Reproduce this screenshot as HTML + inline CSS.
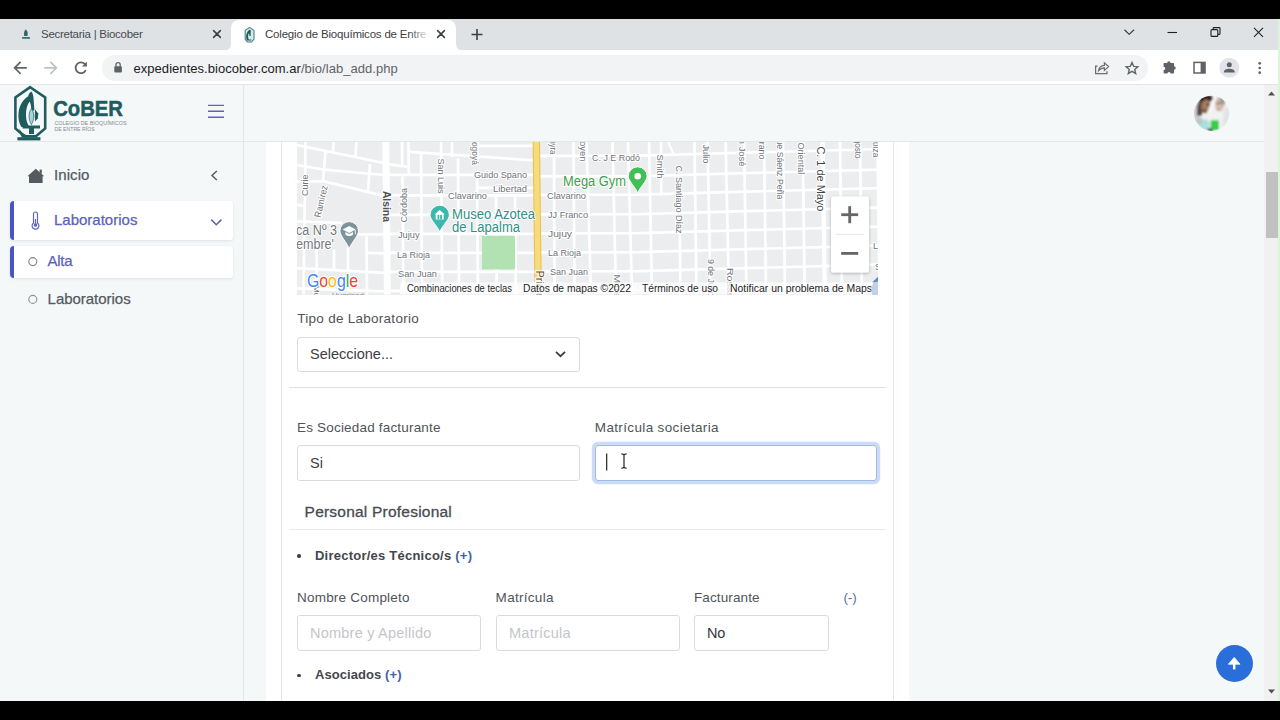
<!DOCTYPE html>
<html>
<head>
<meta charset="utf-8">
<title>Colegio de Bioquímicos de Entre Ríos</title>
<style>
*{box-sizing:border-box;margin:0;padding:0}
html,body{width:1280px;height:720px;overflow:hidden;background:#000;font-family:"Liberation Sans",sans-serif;}
.abs{position:absolute}
#stage{position:absolute;left:0;top:0;width:1280px;height:720px;overflow:hidden;background:#000}
/* browser chrome */
#tabstrip{left:0;top:19px;width:1280px;height:32px;background:#dee2e5}
#tab2{left:231px;top:20px;width:225px;height:31px;background:#fff;border-radius:8px 8px 0 0}
.tabtxt{font-size:11.5px;color:#3c4043;white-space:nowrap;letter-spacing:-0.27px}
#toolbar{left:0;top:50px;width:1280px;height:35px;background:#fff;border-bottom:1px solid #e3e6e8}
#omni{left:101.5px;top:55px;width:1046.5px;height:26px;border-radius:13px;background:#f1f3f4}
#url{left:133.5px;top:60.5px;font-size:13px;color:#202124;white-space:nowrap;letter-spacing:.045px}
#url span{color:#5f6368}
/* page */
#page{left:0;top:85px;width:1264px;height:616px;background:#f5f8f9;overflow:hidden}
#sidebar{left:0;top:0;width:244px;height:616px;border-right:1px solid #e2e6e9;background:#f5f8f9}
#sidehead{left:0;top:0;width:1264px;height:57px;border-bottom:1px solid #e3e7ea}
#mainhead{left:244px;top:0;width:1020px;height:56px}
.nav{font-size:15px;color:#545a5f;white-space:nowrap;letter-spacing:0;-webkit-text-stroke:.25px currentColor}
.navact{background:#fff;border-radius:4px 3px 3px 4px;box-shadow:0 1px 3px rgba(60,70,90,.12)}
#card{left:266px;top:57px;width:643px;height:570px;background:#fff}
.lbl{font-size:13.5px;color:#4f5458;white-space:nowrap;letter-spacing:.25px}
.inp{background:#fff;border:1px solid #d9dcdf;border-radius:3px;font-size:14.5px;color:#3c4043;padding-left:12px;white-space:nowrap}
.ph{color:#c3c6ca}
.hr{height:1px;background:#dfe2e5}
.b{font-weight:bold;font-size:13px;color:#43474b;white-space:nowrap;letter-spacing:.234px}
.dot{width:3.6px;height:3.6px;border-radius:50%;background:#3f4447}
.lk{color:#3f62a8}
#sbar{left:1264px;top:85px;width:16px;height:616px;background:#f1f1f1}
#sthumb{left:1266px;top:172px;width:12px;height:66px;background:#c1c1c1}
#gstrip{left:1278px;top:19px;width:2px;height:682px;background:#dcf5d8}
</style>
</head>
<body>
<div id="stage">
  <!-- TAB STRIP -->
  <div id="tabstrip" class="abs"></div>
  <div id="tab2" class="abs"></div>
  <div class="abs tabtxt" style="left:41px;top:28px;color:#474b4f">Secretaria | Biocober</div>
  <div class="abs tabtxt" style="left:265px;top:28px;width:164px;overflow:hidden;letter-spacing:-0.2px">Colegio de Bioquímicos de Entre Ríos</div><div class="abs" style="left:409px;top:24px;width:21px;height:22px;background:linear-gradient(90deg,rgba(255,255,255,0),#fff)"></div>
  <!-- TOOLBAR -->
  <div id="toolbar" class="abs"></div>
  <div id="omni" class="abs"></div>
  <div id="url" class="abs">expedientes.biocober.com.ar<span>/bio/lab_add.php</span></div>


  <svg class="abs" style="left:0;top:0" width="1280" height="86" viewBox="0 0 1280 86" fill="none" stroke-linecap="round" stroke-linejoin="round">
    <!-- tab curve feet -->
    <path d="M223,51 Q231,51 231,43 L231,51Z" fill="#fff" stroke="none"/>
    <path d="M464,51 Q456,51 456,43 L456,51Z" fill="#fff" stroke="none"/>
    <!-- favicon 1 -->
    <g stroke="none" fill="#2a6b69">
      <path d="M25.6,29.5 C27.6,30.5 28.2,33 27.4,36 L24.2,36 C23.6,33.5 24,31 25.6,29.5Z"/>
      <rect x="22" y="37" width="8" height="1.8" rx=".5" fill="#37716f"/>
    </g>
    <!-- favicon 2 -->
    <g>
      <path d="M249.6,27.4 L254,30.4 L254,39.2 L251.6,42 L247.4,42 L245.2,39.2 L245.2,30.4Z" stroke="#4f7f80" stroke-width="1.1" fill="#d6eaee"/>
      <path d="M250,29.6 C251,30.6 251,32 250.6,33.6 L250.8,36 L249.6,36 C249.4,34.6 249.2,33.6 248.8,33.2 C247.8,35 247.8,37.4 248.8,39.6 L251.4,39.6 L251.4,40.6 L247,40.6 C245.8,38 245.8,34.6 247.4,32 C248,31 249,30 250,29.6Z" fill="#1f5b5d" stroke="none"/>
    </g>
    <!-- tab close x -->
    <g stroke="#3c4043" stroke-width="1.5">
      <path d="M213.6,30.6 L220.4,37.4 M220.4,30.6 L213.6,37.4"/>
      <path d="M437.6,30.6 L444.4,37.4 M444.4,30.6 L437.6,37.4"/>
    </g>
    <!-- new tab plus -->
    <path d="M471.5,34.5 L482.5,34.5 M477,29 L477,40" stroke="#3c4043" stroke-width="1.6" stroke-linecap="butt"/>
    <!-- window controls -->
    <g stroke="#202124" stroke-width="1.1" stroke-linecap="butt">
      <path d="M1124.5,29.8 L1129.2,34.4 L1134,29.8" stroke="#3c4043" stroke-width="1.2"/>
      <path d="M1167.5,32.5 L1177,32.5"/>
      <rect x="1211" y="29.6" width="6.8" height="6.8" rx="1"/>
      <path d="M1213.2,29.4 L1213.2,28.2 Q1213.2,27.6 1213.8,27.6 L1219.4,27.6 Q1220,27.6 1220,28.2 L1220,33.8 Q1220,34.4 1219.4,34.4 L1218,34.4"/>
      <path d="M1254,27.8 L1263,36.8 M1263,27.8 L1254,36.8"/>
    </g>
    
    <!-- nav arrows -->
    <g stroke="#5f6368" stroke-width="1.7" stroke-linecap="butt" stroke-linejoin="miter">
      <path d="M26.8,67.8 L15,67.8 M20.6,61.8 L14.6,67.8 L20.6,73.8"/>
    </g>
    <g stroke="#bdc1c6" stroke-width="1.7" stroke-linecap="butt" stroke-linejoin="miter">
      <path d="M44.2,67.8 L56,67.8 M50.4,61.8 L56.4,67.8 L50.4,73.8"/>
    </g>
    <!-- reload -->
    <g stroke="#5f6368" stroke-width="1.8" stroke-linecap="butt">
      <path d="M85.2,64.4 A5.4,5.4 0 1 0 85.8,70.2"/>
      <path d="M86.9,61.6 L86.9,66.4 L82.1,66.4Z" fill="#5f6368" stroke="none"/>
    </g>
    <!-- lock -->
    <g>
      <rect x="114.3" y="66.2" width="7.6" height="6.2" rx="1" fill="#5f6368" stroke="none"/>
      <path d="M116,66.4 L116,64.8 A2.1,2.1 0 0 1 120.2,64.8 L120.2,66.4" stroke="#5f6368" stroke-width="1.3"/>
    </g>
    <!-- share -->
    <g stroke="#6b6f74" stroke-width="1.25" stroke-linecap="butt" stroke-linejoin="miter">
      <path d="M1097.6,66.2 L1095.6,66.2 L1095.6,73.6 L1107,73.6 L1107,71.2"/>
      <path d="M1098.6,70.6 C1099,67.4 1101.4,65.6 1104.4,65.4 L1104.4,62.8 L1108.6,66.6 L1104.4,70.4 L1104.4,67.8 C1102,67.8 1100.2,68.6 1098.6,70.6Z"/>
    </g>
    <!-- star -->
    <path d="M1132,62.4 L1133.7,66.3 L1137.9,66.7 L1134.7,69.5 L1135.7,73.6 L1132,71.4 L1128.3,73.6 L1129.3,69.5 L1126.1,66.7 L1130.3,66.3Z" stroke="#5f6368" stroke-width="1.35" stroke-linejoin="miter"/>
    <!-- puzzle -->
    <path d="M1167.2,63 a1.7,1.7 0 0 1 3.4,0 L1173.4,63 Q1174,63 1174,63.6 L1174,66.2 a1.75,1.75 0 0 1 0,3.5 L1174,72.8 Q1174,73.6 1173.2,73.6 L1170.6,73.6 a1.6,1.6 0 0 0 -3.2,0 L1164.4,73.6 Q1163.6,73.6 1163.6,72.8 L1163.6,70 a1.6,1.6 0 0 0 0,-3.2 L1163.6,63.8 Q1163.6,63 1164.4,63Z" fill="#5f6368" stroke="none"/>
    <!-- side panel -->
    <g>
      <rect x="1194" y="62.4" width="11" height="10.6" stroke="#5f6368" stroke-width="1.5" stroke-linejoin="miter"/>
      <rect x="1200.6" y="62.4" width="4.6" height="10.6" fill="#5f6368" stroke="none"/>
    </g>
    <!-- profile -->
    <circle cx="1229.3" cy="67.8" r="10" fill="#e2e4ea" stroke="none"/>
    <circle cx="1229.3" cy="64.8" r="2.5" fill="#5f6368" stroke="none"/>
    <path d="M1223.8,72.6 C1223.8,69.6 1226.6,68.8 1229.3,68.8 C1232,68.8 1234.8,69.6 1234.8,72.6Z" fill="#5f6368" stroke="none"/>
    <!-- menu -->
    <g fill="#5f6368" stroke="none">
      <circle cx="1259.7" cy="63.3" r="1.35"/><circle cx="1259.7" cy="68" r="1.35"/><circle cx="1259.7" cy="72.7" r="1.35"/>
    </g>
  </svg>
  <!-- PAGE -->
  <div id="page" class="abs">
    <div id="sidebar" class="abs"></div>
    <div id="mainhead" class="abs"></div>
    <div id="card" class="abs"></div>
    <div id="sidehead" class="abs"></div>
    <div class="abs" style="left:281px;top:57px;width:613px;height:600px;border:1px solid #e4e7ea;border-top:none"></div>

    <!-- sidebar nav -->
    <div class="abs nav" style="left:54px;top:81.3px;letter-spacing:.09px">Inicio</div>
    <div class="abs navact" style="left:10px;top:116px;width:223px;height:39px;border-left:4px solid #4a55c4"></div>
    <div class="abs nav" style="left:54px;top:126.3px;color:#5a62ba">Laboratorios</div>
    <div class="abs navact" style="left:10px;top:161px;width:223px;height:32px;border-left:4px solid #4a55c4"></div>
    <div class="abs nav" style="left:47.6px;top:167.3px;color:#5a62ba;letter-spacing:-.3px">Alta</div>
    <div class="abs nav" style="left:47.6px;top:205.3px;letter-spacing:-.03px">Laboratorios</div>

    <!-- form -->
    <!--MAP--><svg class="abs" style="left:297px;top:56.6px" width="581" height="153" viewBox="0 0 581 153" font-family="Liberation Sans, sans-serif">
<rect width="581" height="153" fill="#ebedef"/>
<line x1="8.5" y1="-0.6" x2="6.5" y2="152.4" stroke="#fff" stroke-width="2.7"/>
<line x1="0.0" y1="3.1" x2="87.0" y2="21.0" stroke="#fff" stroke-width="2.7"/>
<polyline points="0.0,23.0 27.0,27.7 87.0,33.0" fill="none" stroke="#fff" stroke-width="2.7"/>
<line x1="0.0" y1="39.4" x2="27.0" y2="39.4" stroke="#fff" stroke-width="2.7"/>
<line x1="27.0" y1="39.4" x2="87.0" y2="53.9" stroke="#fff" stroke-width="2.7"/>
<line x1="0.0" y1="62.9" x2="9.0" y2="64.0" stroke="#fff" stroke-width="2.7"/>
<line x1="36.7" y1="-1.6" x2="36.0" y2="8.9" stroke="#fff" stroke-width="2.7"/>
<line x1="59.5" y1="-1.6" x2="58.5" y2="14.4" stroke="#fff" stroke-width="2.7"/>
<line x1="28.5" y1="9.9" x2="26.0" y2="39.4" stroke="#fff" stroke-width="2.7"/>
<line x1="73.0" y1="21.9" x2="71.0" y2="49.4" stroke="#fff" stroke-width="2.7"/>
<line x1="0.0" y1="79.4" x2="45.0" y2="80.9" stroke="#fff" stroke-width="2.7"/>
<line x1="61.0" y1="92.4" x2="87.0" y2="92.4" stroke="#fff" stroke-width="2.7"/>
<line x1="70.0" y1="110.9" x2="87.0" y2="111.4" stroke="#fff" stroke-width="2.7"/>
<line x1="0.0" y1="126.1" x2="87.0" y2="130.8" stroke="#fff" stroke-width="2.7"/>
<line x1="19.7" y1="106.4" x2="19.7" y2="152.4" stroke="#fff" stroke-width="2.7"/>
<line x1="37.0" y1="107.4" x2="37.0" y2="127.4" stroke="#fff" stroke-width="2.7"/>
<line x1="51.0" y1="105.4" x2="51.0" y2="128.4" stroke="#fff" stroke-width="2.7"/>
<line x1="69.5" y1="94.4" x2="70.0" y2="152.4" stroke="#fff" stroke-width="2.7"/>
<line x1="0.0" y1="146.4" x2="87.0" y2="149.4" stroke="#fff" stroke-width="2.7"/>
<line x1="105.0" y1="-0.6" x2="105.2" y2="23.9" stroke="#fff" stroke-width="2.7"/>
<line x1="105.5" y1="34.4" x2="106.4" y2="152.4" stroke="#fff" stroke-width="2.7"/>
<line x1="111.5" y1="-0.6" x2="111.8" y2="33.4" stroke="#fff" stroke-width="2.7"/>
<line x1="124.0" y1="10.4" x2="125.1" y2="152.4" stroke="#fff" stroke-width="2.7"/>
<line x1="144.0" y1="-0.6" x2="145.2" y2="152.4" stroke="#fff" stroke-width="2.7"/>
<line x1="155.0" y1="-0.6" x2="155.1" y2="14.9" stroke="#fff" stroke-width="2.7"/>
<line x1="161.0" y1="16.4" x2="162.1" y2="152.4" stroke="#fff" stroke-width="2.7"/>
<line x1="180.0" y1="34.4" x2="180.9" y2="152.4" stroke="#fff" stroke-width="2.7"/>
<line x1="199.0" y1="53.4" x2="199.8" y2="152.4" stroke="#fff" stroke-width="2.7"/>
<line x1="218.0" y1="53.4" x2="218.8" y2="152.4" stroke="#fff" stroke-width="2.7"/>
<line x1="180.5" y1="-0.6" x2="180.6" y2="17.4" stroke="#fff" stroke-width="2.7"/>
<line x1="92.0" y1="22.4" x2="111.0" y2="24.9" stroke="#fff" stroke-width="2.7"/>
<line x1="112.0" y1="9.9" x2="238.0" y2="18.4" stroke="#fff" stroke-width="2.7"/>
<line x1="181.0" y1="3.9" x2="238.0" y2="3.9" stroke="#fff" stroke-width="2.7"/>
<line x1="92.0" y1="32.9" x2="239.0" y2="32.9" stroke="#fff" stroke-width="2.7"/>
<line x1="181.0" y1="45.9" x2="239.0" y2="45.9" stroke="#fff" stroke-width="2.7"/>
<line x1="92.0" y1="53.4" x2="239.0" y2="53.4" stroke="#fff" stroke-width="2.7"/>
<line x1="92.0" y1="72.9" x2="239.0" y2="72.9" stroke="#fff" stroke-width="2.7"/>
<line x1="92.0" y1="91.9" x2="239.0" y2="91.9" stroke="#fff" stroke-width="2.7"/>
<line x1="92.0" y1="110.9" x2="239.0" y2="110.9" stroke="#fff" stroke-width="2.7"/>
<line x1="92.0" y1="129.9" x2="239.0" y2="129.9" stroke="#fff" stroke-width="2.7"/>
<line x1="92.0" y1="148.9" x2="239.0" y2="148.9" stroke="#fff" stroke-width="2.7"/>
<line x1="257.0" y1="14.4" x2="257.5" y2="152.4" stroke="#fff" stroke-width="2.7"/>
<line x1="276.5" y1="-0.6" x2="277.5" y2="152.4" stroke="#fff" stroke-width="2.7"/>
<line x1="289.5" y1="-0.6" x2="294.0" y2="152.4" stroke="#fff" stroke-width="2.7"/>
<line x1="315.5" y1="-0.6" x2="319.0" y2="152.4" stroke="#fff" stroke-width="2.7"/>
<line x1="331.0" y1="-0.6" x2="335.0" y2="152.4" stroke="#fff" stroke-width="2.7"/>
<line x1="352.0" y1="-0.6" x2="355.0" y2="152.4" stroke="#fff" stroke-width="2.7"/>
<line x1="364.0" y1="-0.6" x2="364.2" y2="53.4" stroke="#fff" stroke-width="2.7"/>
<line x1="382.5" y1="53.4" x2="383.5" y2="152.4" stroke="#fff" stroke-width="2.7"/>
<line x1="397.5" y1="-0.6" x2="399.5" y2="152.4" stroke="#fff" stroke-width="2.7"/>
<line x1="410.5" y1="-0.6" x2="413.5" y2="152.4" stroke="#fff" stroke-width="2.7"/>
<line x1="428.6" y1="-0.6" x2="432.0" y2="152.4" stroke="#fff" stroke-width="2.7"/>
<line x1="447.0" y1="-0.6" x2="449.5" y2="152.4" stroke="#fff" stroke-width="2.7"/>
<line x1="467.0" y1="-0.6" x2="469.0" y2="152.4" stroke="#fff" stroke-width="2.7"/>
<line x1="486.0" y1="-0.6" x2="488.0" y2="152.4" stroke="#fff" stroke-width="2.7"/>
<line x1="505.7" y1="-0.6" x2="507.7" y2="152.4" stroke="#fff" stroke-width="2.7"/>
<line x1="543.0" y1="-0.6" x2="545.0" y2="152.4" stroke="#fff" stroke-width="2.7"/>
<line x1="563.0" y1="-0.6" x2="565.0" y2="152.4" stroke="#fff" stroke-width="2.7"/>
<line x1="580.5" y1="-0.6" x2="582.5" y2="152.4" stroke="#fff" stroke-width="2.7"/>
<line x1="525.6" y1="-0.6" x2="527.8" y2="152.4" stroke="#fff" stroke-width="4.2"/>
<polyline points="243.0,-5.1 343.0,-5.4 581.0,-11.9" fill="none" stroke="#fff" stroke-width="2.7"/>
<polyline points="243.0,13.9 343.0,13.6 581.0,7.1" fill="none" stroke="#fff" stroke-width="2.7"/>
<polyline points="243.0,34.4 343.0,34.1 581.0,27.6" fill="none" stroke="#fff" stroke-width="2.7"/>
<polyline points="243.0,52.9 343.0,52.6 581.0,46.1" fill="none" stroke="#fff" stroke-width="2.7"/>
<polyline points="243.0,72.4 343.0,72.1 581.0,65.6" fill="none" stroke="#fff" stroke-width="2.7"/>
<polyline points="243.0,91.4 343.0,91.1 581.0,84.6" fill="none" stroke="#fff" stroke-width="2.7"/>
<polyline points="243.0,110.4 343.0,110.1 581.0,103.6" fill="none" stroke="#fff" stroke-width="2.7"/>
<polyline points="243.0,129.4 343.0,129.1 581.0,122.6" fill="none" stroke="#fff" stroke-width="2.7"/>
<polyline points="243.0,148.4 343.0,148.1 581.0,141.6" fill="none" stroke="#fff" stroke-width="2.7"/>
<line x1="371.0" y1="-0.6" x2="377.0" y2="13.4" stroke="#fff" stroke-width="2"/>
<line x1="88.8" y1="-0.6" x2="90.4" y2="152.4" stroke="#fff" stroke-width="7"/>
<line x1="239.3" y1="-0.6" x2="241.2" y2="152.4" stroke="#e8c255" stroke-width="7.4"/>
<line x1="239.3" y1="-0.6" x2="241.2" y2="152.4" stroke="#f8dc7c" stroke-width="5.2"/>
<rect x="185" y="93.9" width="33" height="33.5" fill="#b3e2b2"/>
<text x="177.0" y="35.8" font-size="9.5" fill="#6f7478" font-weight="normal" textLength="53.0" lengthAdjust="spacingAndGlyphs" stroke="#fff" stroke-width="2.2" paint-order="stroke" stroke-linejoin="round">Guido Spano</text>
<text x="196.0" y="49.8" font-size="9.5" fill="#6f7478" font-weight="normal" textLength="34.0" lengthAdjust="spacingAndGlyphs" stroke="#fff" stroke-width="2.2" paint-order="stroke" stroke-linejoin="round">Libertad</text>
<text x="151.0" y="57.3" font-size="9.5" fill="#6f7478" font-weight="normal" textLength="39.0" lengthAdjust="spacingAndGlyphs" stroke="#fff" stroke-width="2.2" paint-order="stroke" stroke-linejoin="round">Clavarino</text>
<text x="250.0" y="57.3" font-size="9.5" fill="#6f7478" font-weight="normal" textLength="39.0" lengthAdjust="spacingAndGlyphs" stroke="#fff" stroke-width="2.2" paint-order="stroke" stroke-linejoin="round">Clavarino</text>
<text x="251.0" y="75.8" font-size="9.5" fill="#6f7478" font-weight="normal" textLength="40.0" lengthAdjust="spacingAndGlyphs" stroke="#fff" stroke-width="2.2" paint-order="stroke" stroke-linejoin="round">JJ Franco</text>
<text x="101.0" y="95.8" font-size="9.5" fill="#6f7478" font-weight="normal" textLength="21.5" lengthAdjust="spacingAndGlyphs" stroke="#fff" stroke-width="2.2" paint-order="stroke" stroke-linejoin="round">Jujuy</text>
<text x="251.0" y="95.3" font-size="9.5" fill="#6f7478" font-weight="normal" textLength="24.0" lengthAdjust="spacingAndGlyphs" stroke="#fff" stroke-width="2.2" paint-order="stroke" stroke-linejoin="round">Jujuy</text>
<text x="100.0" y="115.8" font-size="9.5" fill="#6f7478" font-weight="normal" textLength="33.0" lengthAdjust="spacingAndGlyphs" stroke="#fff" stroke-width="2.2" paint-order="stroke" stroke-linejoin="round">La Rioja</text>
<text x="251.0" y="114.3" font-size="9.5" fill="#6f7478" font-weight="normal" textLength="33.0" lengthAdjust="spacingAndGlyphs" stroke="#fff" stroke-width="2.2" paint-order="stroke" stroke-linejoin="round">La Rioja</text>
<text x="101.0" y="134.8" font-size="9.5" fill="#6f7478" font-weight="normal" textLength="39.0" lengthAdjust="spacingAndGlyphs" stroke="#fff" stroke-width="2.2" paint-order="stroke" stroke-linejoin="round">San Juan</text>
<text x="253.0" y="133.3" font-size="9.5" fill="#6f7478" font-weight="normal" textLength="38.0" lengthAdjust="spacingAndGlyphs" stroke="#fff" stroke-width="2.2" paint-order="stroke" stroke-linejoin="round">San Juan</text>
<text x="295.0" y="18.8" font-size="9.5" fill="#6f7478" font-weight="normal" textLength="48.0" lengthAdjust="spacingAndGlyphs" stroke="#fff" stroke-width="2.2" paint-order="stroke" stroke-linejoin="round">C. J E Rodó</text>
<text x="576.0" y="106.8" font-size="9.5" fill="#6f7478" font-weight="normal" textLength="10.0" lengthAdjust="spacingAndGlyphs" stroke="#fff" stroke-width="2.2" paint-order="stroke" stroke-linejoin="round">La</text>
<text x="578.0" y="127.8" font-size="9.5" fill="#6f7478" font-weight="normal" textLength="6.0" lengthAdjust="spacingAndGlyphs" stroke="#fff" stroke-width="2.2" paint-order="stroke" stroke-linejoin="round">S</text>
<text transform="translate(11.4,53.9) rotate(-90)" font-size="9.5" fill="#6f7478" font-weight="normal" textLength="21.5" lengthAdjust="spacingAndGlyphs" stroke="#fff" stroke-width="2.2" paint-order="stroke" stroke-linejoin="round">Curie</text>
<text transform="translate(23.6,75.9) rotate(-77.5)" font-size="9.5" fill="#6f7478" font-weight="normal" textLength="32.5" lengthAdjust="spacingAndGlyphs" stroke="#fff" stroke-width="2.2" paint-order="stroke" stroke-linejoin="round">Ramírez</text>
<text transform="translate(85.9,48.9) rotate(90)" font-size="11.5" fill="#4d5154" font-weight="bold" textLength="31.0" lengthAdjust="spacingAndGlyphs" stroke="#fff" stroke-width="2.2" paint-order="stroke" stroke-linejoin="round">Alsina</text>
<text transform="translate(110.0,80.4) rotate(-90)" font-size="9.5" fill="#6f7478" font-weight="normal" textLength="34.5" lengthAdjust="spacingAndGlyphs" stroke="#fff" stroke-width="2.2" paint-order="stroke" stroke-linejoin="round">Córdoba</text>
<text transform="translate(140.6,16.4) rotate(90)" font-size="9.5" fill="#6f7478" font-weight="normal" textLength="35.0" lengthAdjust="spacingAndGlyphs" stroke="#fff" stroke-width="2.2" paint-order="stroke" stroke-linejoin="round">San Luis</text>
<text transform="translate(175.1,-15.6) rotate(90)" font-size="9.5" fill="#6f7478" font-weight="normal" textLength="38.5" lengthAdjust="spacingAndGlyphs" stroke="#fff" stroke-width="2.2" paint-order="stroke" stroke-linejoin="round">Goyogoyá</text>
<text transform="translate(252.6,-8.6) rotate(90)" font-size="9.5" fill="#6f7478" font-weight="normal" textLength="21.0" lengthAdjust="spacingAndGlyphs" stroke="#fff" stroke-width="2.2" paint-order="stroke" stroke-linejoin="round">Ghyra</text>
<text transform="translate(282.6,-17.6) rotate(90)" font-size="9.5" fill="#6f7478" font-weight="normal" textLength="37.0" lengthAdjust="spacingAndGlyphs" stroke="#fff" stroke-width="2.2" paint-order="stroke" stroke-linejoin="round">Yrigoyen</text>
<text transform="translate(360.1,12.4) rotate(90)" font-size="9.5" fill="#6f7478" font-weight="normal" textLength="24.0" lengthAdjust="spacingAndGlyphs" stroke="#fff" stroke-width="2.2" paint-order="stroke" stroke-linejoin="round">Smith</text>
<text transform="translate(379.1,23.4) rotate(90)" font-size="9.5" fill="#6f7478" font-weight="normal" textLength="68.0" lengthAdjust="spacingAndGlyphs" stroke="#fff" stroke-width="2.2" paint-order="stroke" stroke-linejoin="round">C. Santiago Díaz</text>
<text transform="translate(405.6,2.4) rotate(90)" font-size="9.5" fill="#6f7478" font-weight="normal" textLength="19.0" lengthAdjust="spacingAndGlyphs" stroke="#fff" stroke-width="2.2" paint-order="stroke" stroke-linejoin="round">Julio</text>
<text transform="translate(442.1,-14.6) rotate(90)" font-size="9.5" fill="#6f7478" font-weight="normal" textLength="39.0" lengthAdjust="spacingAndGlyphs" stroke="#fff" stroke-width="2.2" paint-order="stroke" stroke-linejoin="round">San José</text>
<text transform="translate(461.6,-6.6) rotate(90)" font-size="9.5" fill="#6f7478" font-weight="normal" textLength="24.0" lengthAdjust="spacingAndGlyphs" stroke="#fff" stroke-width="2.2" paint-order="stroke" stroke-linejoin="round">Urano</text>
<text transform="translate(480.1,-18.6) rotate(90)" font-size="9.5" fill="#6f7478" font-weight="normal" textLength="76.0" lengthAdjust="spacingAndGlyphs" stroke="#fff" stroke-width="2.2" paint-order="stroke" stroke-linejoin="round">Roque Sáenz Peña</text>
<text transform="translate(500.6,0.4) rotate(90)" font-size="9.5" fill="#6f7478" font-weight="normal" textLength="32.0" lengthAdjust="spacingAndGlyphs" stroke="#fff" stroke-width="2.2" paint-order="stroke" stroke-linejoin="round">Oriental</text>
<text transform="translate(520.4,4.4) rotate(90)" font-size="11.5" fill="#3f4346" font-weight="normal" textLength="65.0" lengthAdjust="spacingAndGlyphs" stroke="#fff" stroke-width="2.2" paint-order="stroke" stroke-linejoin="round">C. 1 de Mayo</text>
<text transform="translate(558.1,-8.6) rotate(90)" font-size="9.5" fill="#6f7478" font-weight="normal" textLength="25.0" lengthAdjust="spacingAndGlyphs" stroke="#fff" stroke-width="2.2" paint-order="stroke" stroke-linejoin="round">Agosto</text>
<text transform="translate(576.1,-5.6) rotate(90)" font-size="9.5" fill="#6f7478" font-weight="normal" textLength="21.0" lengthAdjust="spacingAndGlyphs" stroke="#fff" stroke-width="2.2" paint-order="stroke" stroke-linejoin="round">Suiza</text>
<text transform="translate(411.1,116.9) rotate(90)" font-size="9.5" fill="#6f7478" font-weight="normal" textLength="37.5" lengthAdjust="spacingAndGlyphs" stroke="#fff" stroke-width="2.2" paint-order="stroke" stroke-linejoin="round">9 de Julio</text>
<text transform="translate(429.6,125.9) rotate(90)" font-size="9.5" fill="#6f7478" font-weight="normal" textLength="36.5" lengthAdjust="spacingAndGlyphs" stroke="#fff" stroke-width="2.2" paint-order="stroke" stroke-linejoin="round">Rosario</text>
<text transform="translate(316.6,132.4) rotate(90)" font-size="9.5" fill="#6f7478" font-weight="normal" textLength="23.0" lengthAdjust="spacingAndGlyphs" stroke="#fff" stroke-width="2.2" paint-order="stroke" stroke-linejoin="round">Mitre</text>
<text transform="translate(238.7,128.4) rotate(90)" font-size="10.5" fill="#5a4a20" font-weight="normal" textLength="38.0" lengthAdjust="spacingAndGlyphs" stroke="#fff" stroke-width="2.2" paint-order="stroke" stroke-linejoin="round">Primera</text>
<text transform="translate(17.1,143.4) rotate(90)" font-size="8" fill="#6f7478" font-weight="normal" textLength="12.0" lengthAdjust="spacingAndGlyphs" stroke="#fff" stroke-width="2.2" paint-order="stroke" stroke-linejoin="round">Mu</text>
<text x="155.0" y="76.9" font-size="14" fill="#2f9089" font-weight="normal" textLength="83.0" lengthAdjust="spacingAndGlyphs" stroke="#fff" stroke-width="2.2" paint-order="stroke" stroke-linejoin="round">Museo Azotea</text>
<text x="155.0" y="90.4" font-size="14" fill="#2f9089" font-weight="normal" textLength="68.0" lengthAdjust="spacingAndGlyphs" stroke="#fff" stroke-width="2.2" paint-order="stroke" stroke-linejoin="round">de Lapalma</text>
<text x="266.0" y="43.9" font-size="14" fill="#3f9e4d" font-weight="normal" textLength="63.0" lengthAdjust="spacingAndGlyphs" stroke="#fff" stroke-width="2.2" paint-order="stroke" stroke-linejoin="round">Mega Gym</text>
<text x="-1.0" y="92.9" font-size="14" fill="#72797d" font-weight="normal" textLength="41.0" lengthAdjust="spacingAndGlyphs" stroke="#fff" stroke-width="2.2" paint-order="stroke" stroke-linejoin="round">ca Nº 3</text>
<text x="-1.0" y="106.9" font-size="14" fill="#72797d" font-weight="normal" textLength="38.0" lengthAdjust="spacingAndGlyphs" stroke="#fff" stroke-width="2.2" paint-order="stroke" stroke-linejoin="round">embre'</text>
<path d="M142.7,90.2 C140.7,84.2 133.0,77.9 133.0,72.9 A9.7,9.7 0 1 1 152.4,72.9 C152.4,77.9 144.7,84.2 142.7,90.2Z" fill="#3cb8ac" stroke="#fff" stroke-width="1"/><path d="M137.7,72.4 L142.7,67.9 L147.7,72.4 L146.7,72.4 L146.7,77.4 L138.7,77.4 L138.7,72.4Z" fill="#fff"/><rect x="140.5" y="72.9" width="4.4" height="4.5" fill="#3cb8ac"/><rect x="142.3" y="72.9" width="0.8" height="4.5" fill="#fff"/>
<path d="M340.7,51.2 C338.7,45.2 331.3,39.2 331.3,34.2 A9.4,9.4 0 1 1 350.1,34.2 C350.1,39.2 342.7,45.2 340.7,51.2Z" fill="#3fbf55" stroke="#fff" stroke-width="1"/><circle cx="340.7" cy="34.2" r="3.3" fill="#fff"/>
<path d="M52.2,106.8 C50.2,100.8 42.9,93.9 42.9,88.9 A9.3,9.3 0 1 1 61.5,88.9 C61.5,93.9 54.2,100.8 52.2,106.8Z" fill="#7b939b" stroke="#fff" stroke-width="1"/><path d="M45.7,87.4 L52.2,83.9 L58.7,87.4 L52.2,90.9Z" fill="#fff"/><path d="M48.4,89.9 L48.4,92.7 Q52.2,95.4 56.0,92.7 L56.0,89.9 L52.2,92.1Z" fill="#fff"/><rect x="57.8" y="87.9" width="0.9" height="4.5" fill="#fff"/>
<rect x="103" y="140.4" width="478" height="12" fill="#fff" fill-opacity="0.72"/>
<text x="110.0" y="150.0" font-size="10" fill="#1f1f1f" font-weight="normal" textLength="105.0" lengthAdjust="spacingAndGlyphs" >Combinaciones de teclas</text>
<text x="226.0" y="150.0" font-size="10" fill="#1f1f1f" font-weight="normal" textLength="108.0" lengthAdjust="spacingAndGlyphs" >Datos de mapas ©2022</text>
<text x="345.0" y="150.0" font-size="10" fill="#1f1f1f" font-weight="normal" textLength="76.0" lengthAdjust="spacingAndGlyphs" >Términos de uso</text>
<text x="433.0" y="150.0" font-size="10" fill="#1f1f1f" font-weight="normal" textLength="142.0" lengthAdjust="spacingAndGlyphs" >Notificar un problema de Maps</text>
<circle cx="587.5" cy="147.9" r="13" fill="#bdd2ea"/>
<path d="M575,140.4 L581.5,134.4 L584,134.4 L584,138.9 Z" fill="#5b8ac8"/>
<text x="10" y="145.4" font-size="18.5" textLength="51" lengthAdjust="spacingAndGlyphs" stroke="#fff" stroke-width="2.6" paint-order="stroke" stroke-linejoin="round"><tspan fill="#4285f4">G</tspan><tspan fill="#ea4335">o</tspan><tspan fill="#fbbc05">o</tspan><tspan fill="#4285f4">g</tspan><tspan fill="#34a853">l</tspan><tspan fill="#ea4335">e</tspan></text>
<text x="35" y="156.4" font-size="8" fill="#80868b">Huminad</text>
<rect x="534" y="54.400000000000006" width="38" height="76" rx="2" fill="#fff" filter="url(#zsh)"/>
<rect x="539" y="91.9" width="28" height="1" fill="#e6e6e6"/>
<rect x="544.2" y="71.3" width="17" height="2.8" fill="#666"/><rect x="551.3" y="64.2" width="2.8" height="17" fill="#666"/>
<rect x="544.2" y="110.0" width="17" height="2.8" fill="#666"/>
<defs><filter id="zsh" x="-20%" y="-10%" width="140%" height="125%"><feDropShadow dx="0" dy="1" stdDeviation="1.5" flood-color="#000" flood-opacity="0.28"/></filter></defs>
</svg>
<!--/MAP-->
    <div class="abs lbl" style="left:297.3px;top:226.3px;letter-spacing:.268px">Tipo de Laboratorio</div>
    <div class="abs inp" style="left:297px;top:252px;width:283px;height:35px;line-height:33px">Seleccione...</div>
    <div class="abs hr" style="left:289px;top:302px;width:597px"></div>
    <div class="abs lbl" style="left:297px;top:334.7px;letter-spacing:.186px">Es Sociedad facturante</div>
    <div class="abs lbl" style="left:594.8px;top:334.7px;letter-spacing:.355px">Matrícula societaria</div>
    <div class="abs inp" style="left:297px;top:360px;width:283px;height:36px;line-height:34px">Si</div>
    <div class="abs inp" style="left:595px;top:360px;width:282px;height:36px;border-color:#9dbbe6;box-shadow:0 0 0 3.2px rgba(90,140,220,.3)"></div>
    <div class="abs ttl" style="left:304.6px;top:418.2px;font-size:15.5px;color:#474c50;letter-spacing:.219px;white-space:nowrap;-webkit-text-stroke:.3px #474c50">Personal Profesional</div>
    <div class="abs hr" style="left:289px;top:444px;width:597px;background:#e9ecef"></div>
    <div class="abs dot" style="left:297.2px;top:469.3px"></div>
    <div class="abs b" style="left:315px;top:462.7px">Director/es Técnico/s <span class="lk">(+)</span></div>
    <div class="abs lbl" style="left:297px;top:504.5px;letter-spacing:.211px">Nombre Completo</div>
    <div class="abs lbl" style="left:495.6px;top:504.5px;letter-spacing:.296px">Matrícula</div>
    <div class="abs lbl" style="left:694px;top:504.5px;letter-spacing:.117px">Facturante</div>
    <div class="abs lbl lk" style="left:843.4px;top:504.5px;letter-spacing:-.05px;color:#5a70a6">(-)</div>
    <div class="abs inp" style="left:297px;top:530px;width:184px;height:36px;line-height:34px"><span class="ph" style="letter-spacing:.227px">Nombre y Apellido</span></div>
    <div class="abs inp" style="left:496px;top:530px;width:184px;height:36px;line-height:34px"><span class="ph" style="letter-spacing:.245px">Matrícula</span></div>
    <div class="abs inp" style="left:694px;top:530px;width:135px;height:36px;line-height:34px;letter-spacing:-.2px;color:#33373a">No</div>
    <div class="abs dot" style="left:297.2px;top:588.8px"></div>
    <div class="abs b" style="left:315px;top:582.1px;letter-spacing:.074px">Asociados <span class="lk">(+)</span></div>

    <!-- scroll top -->
    <div class="abs" style="left:1215.5px;top:559.8px;width:37.4px;height:37.4px;border-radius:50%;background:#2a6fd9"></div>
    <svg class="abs" style="left:0;top:0" width="1265" height="615" viewBox="0 85 1265 615" fill="none" font-family="Liberation Sans, sans-serif">
      <!-- logo -->
      <g>
        <path d="M30.2,87.2 L45.2,97.5 L45.2,128.5 L36,136.2 L24.4,136.2 L15.4,128.5 L15.4,97.5Z" stroke="#1f5c5e" stroke-width="2.6" stroke-linejoin="miter" fill="#f5f8f9"/>
        <!-- microscope silhouette -->
        <path d="M31.2,91.4 C32.6,92.6 33.4,95 33.5,98 L34.4,110.4 L31.2,110.4 C31.2,106 30.6,103.2 29.6,101.6 C27,105 25.8,110 26,116 C26.2,120.6 27.4,124.4 29.6,127 L21.4,127 C19,123 18,118.4 18.5,113 C19.2,105.6 23,99.4 28.2,96.2 C28.5,94.2 29.6,92.4 31.2,91.4Z" fill="#1f5c5e"/>
        <path d="M31.4,108.6 C34.4,112.4 34.6,119.4 31.4,124.6 C28.2,119.4 28.4,112.4 31.4,108.6Z" fill="#a9d3dd" stroke="#1f5c5e" stroke-width=".7"/>
        <path d="M35,109.6 L38.4,113.4 L37.8,118.4 L35,121.6 L34.8,116Z" fill="#1f5c5e"/>
        <path d="M22.6,125.6 L40,125.6 L40,128.4 L34,128.4 L34,134 L29,134 L29,128.4 L22.6,128.4Z" fill="#1f5c5e"/>
        <path d="M19.4,128.5 C21,132.6 24.6,135 28.4,135.4 L28.4,137.4 L22,137.4 C20.4,135 19.4,132 19.4,128.5Z" fill="#1f5c5e"/>
        <rect x="17.4" y="137.2" width="23" height="3.2" fill="#1f5c5e"/>
        <text x="53.2" y="116" font-size="21.5" font-weight="bold" fill="#1f5c5e" textLength="69.8" lengthAdjust="spacingAndGlyphs" stroke="#1f5c5e" stroke-width=".5">CoBER</text>
        <text x="54.4" y="124.9" font-size="6" fill="#848a8e" textLength="72.2" lengthAdjust="spacingAndGlyphs">COLEGIO DE BIOQUÍMICOS</text>
        <text x="54.4" y="131.1" font-size="6" fill="#848a8e" textLength="40.3" lengthAdjust="spacingAndGlyphs">DE ENTRE RÍOS</text>
      </g>
      <!-- hamburger -->
      <path d="M208,105.4 L224,105.4 M208,111.3 L224,111.3 M208,117.2 L224,117.2" stroke="#6960b4" stroke-width="1.4"/>
      <!-- avatar -->
      <defs><clipPath id="avc"><circle cx="1211.6" cy="113.3" r="17.6"/></clipPath>
        <filter id="avb" x="-20%" y="-20%" width="140%" height="140%"><feGaussianBlur stdDeviation="1.0"/></filter></defs>
      <g clip-path="url(#avc)">
        <rect x="1192" y="94" width="40" height="40" fill="#eef0f0"/>
        <g filter="url(#avb)">
          <rect x="1192" y="94" width="8" height="30" fill="#cfd2d4"/>
          <path d="M1197,116 C1196,104 1199,97 1206,96 L1213,96 C1208,100 1202,104 1202,116Z" fill="#5b4a42"/>
          <ellipse cx="1206" cy="98.6" rx="7.4" ry="3.6" fill="#2f221e"/>
          <ellipse cx="1206.2" cy="106.6" rx="4.8" ry="7" fill="#a67a5f"/>
          <ellipse cx="1208" cy="104.5" rx="1.4" ry="1" fill="#3b2a25"/>
          <ellipse cx="1204.2" cy="110.8" rx="2.2" ry="1.6" fill="#6b4a3c"/>
          <path d="M1214,95 L1218,95 L1209,118 L1205,118Z" fill="#f7f7f6"/>
          <ellipse cx="1219.6" cy="104" rx="4.6" ry="7.2" fill="#d6bdaf"/>
          <ellipse cx="1222.4" cy="101" rx="2.8" ry="4" fill="#a59a93"/>
          <ellipse cx="1218.4" cy="103.4" rx="2.6" ry="1" fill="#8b7d78"/>
          <ellipse cx="1218.2" cy="109.4" rx="1.5" ry="1.1" fill="#b98f84"/>
          <path d="M1199,116 L1228,112 L1230,132 L1196,132Z" fill="#f1f2f2"/>
          <path d="M1224,108 L1232,108 L1232,130 L1222,130Z" fill="#e2e3e5"/>
          <ellipse cx="1204.4" cy="124.6" rx="5.2" ry="5.6" fill="#a9dfdf"/>
          <ellipse cx="1199.5" cy="121" rx="2.5" ry="4" fill="#b9c4c6"/>
          <rect x="1210.6" y="120" width="8.4" height="10.5" rx="1.5" fill="#34cf46"/>
          <ellipse cx="1210" cy="130" rx="3" ry="2" fill="#4a6a58"/>
        </g>
      </g>
      <!-- home icon -->
      <g fill="#555a5e">
        <path d="M35.8,168.8 L44.2,176.2 L42.6,176.2 L42.6,183 L29,183 L29,176.2 L27.4,176.2Z"/>
        <rect x="39.6" y="169.6" width="2.2" height="4" />
      </g>
      <!-- chevron left -->
      <path d="M216.8,171 L212,175.5 L216.8,180" stroke="#5a5f63" stroke-width="1.5"/>
      <!-- thermometer -->
      <g stroke="#6166c0" stroke-width="1.2">
        <path d="M33.5,223 L33.5,214 A2,2 0 0 1 37.5,214 L37.5,223 A3.4,3.4 0 1 1 33.500,223Z"/>
        <circle cx="35.5" cy="225" r="1.2" fill="#6166c0"/>
        <path d="M35.5,224 L35.5,219" />
      </g>
      <!-- chevron down -->
      <path d="M211.2,219.6 L216.3,224.8 L221.4,219.6" stroke="#5d63b5" stroke-width="1.5"/>
      <!-- sub circles -->
      <circle cx="32.8" cy="261.6" r="4" stroke="#7d8286" stroke-width="1.1"/>
      <circle cx="32.8" cy="299.4" r="4" stroke="#8d9296" stroke-width="1.1"/>
      <!-- select chevron -->
      <path d="M556,351.8 L560.5,356.2 L565,351.8" stroke="#3a3f43" stroke-width="1.7"/>
      <!-- text caret + I-beam cursor -->
      <rect x="606" y="453.5" width="1.3" height="17" fill="#333"/>
      <g stroke="#222" stroke-width="1.2">
        <path d="M624,454.6 L624,467.4 M621.4,453.8 Q623.4,453.8 624,455 Q624.6,453.8 626.6,453.8 M621.4,468.2 Q623.4,468.2 624,467 Q624.6,468.2 626.6,468.2"/>
      </g>
      <!-- scroll-top arrow -->
      <path d="M1234.2,669.4 L1234.2,660" stroke="#fff" stroke-width="2.5"/>
      <path d="M1228.4,664.2 L1234.2,657.4 L1240,664.2Z" fill="#fff" stroke="#fff" stroke-width=".8" stroke-linejoin="round"/>
    </svg>

  </div>
  <div id="sbar" class="abs"></div>
  <div id="sthumb" class="abs"></div>
  <div id="gstrip" class="abs"></div>
  <svg class="abs" style="left:1264px;top:85px" width="15" height="615" viewBox="0 0 15 615">
    <path d="M4,10.5 L7.5,6.5 L11,10.5Z" fill="#505050"/>
    <path d="M4,604.5 L7.5,608.5 L11,604.5Z" fill="#505050"/>
  </svg>
</div>
</body>
</html>
